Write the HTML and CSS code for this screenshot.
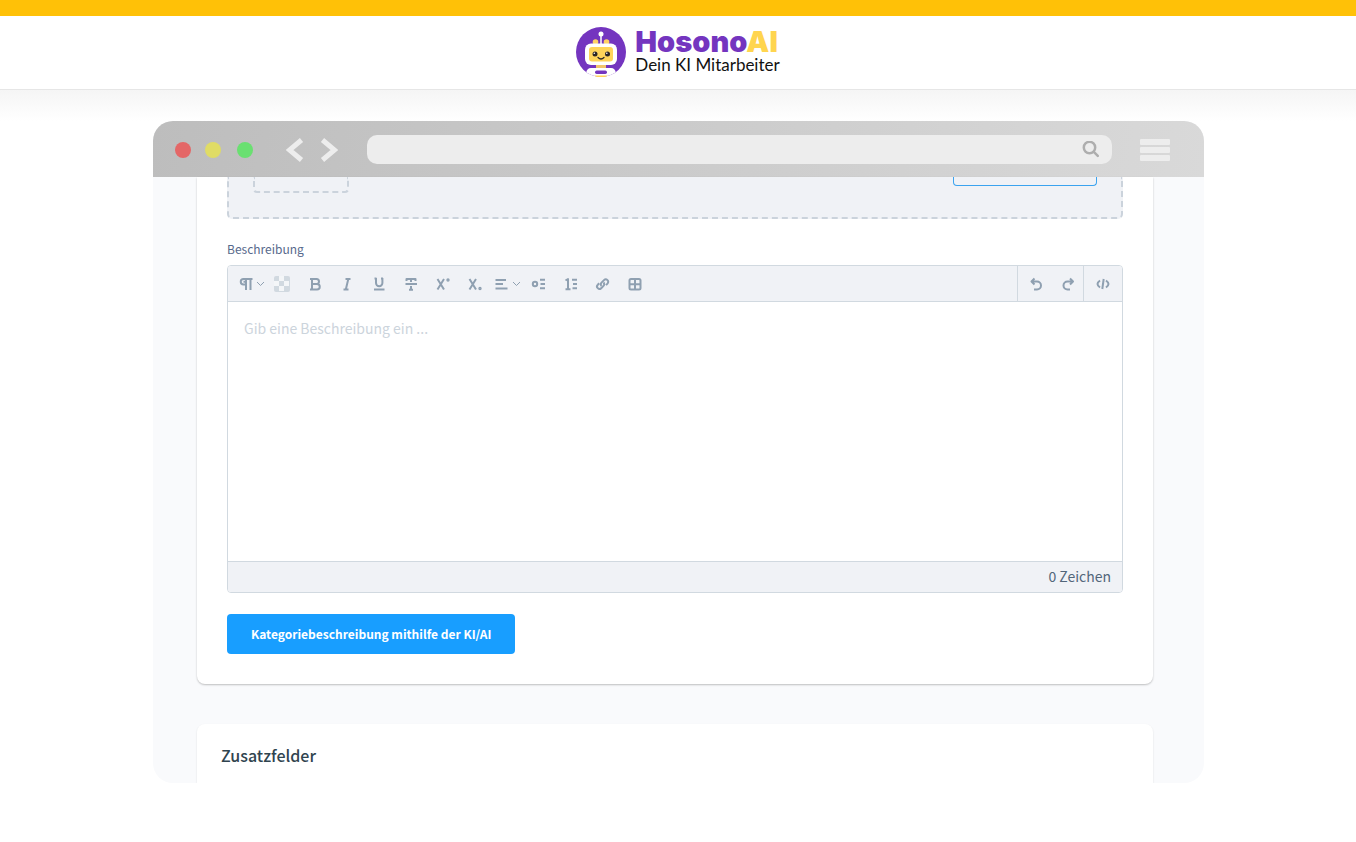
FILE: index.html
```html
<!DOCTYPE html>
<html lang="de">
<head>
<meta charset="utf-8">
<meta name="viewport" content="width=device-width, initial-scale=1">
<title>HosonoAI – Dein KI Mitarbeiter</title>
<link rel="stylesheet" href="styles.css">
</head>
<body>
<div class="topbar"></div>
<header class="header">
  <a class="brand" href="#">
    <svg class="brand-logo" viewBox="0 0 50 50" aria-hidden="true">
      <defs><clipPath id="disc"><circle cx="25" cy="25" r="25"/></clipPath></defs>
      <circle cx="25" cy="25" r="25" fill="#7435bf"/>
      <g clip-path="url(#disc)">
        <path d="M0 50V46L10 46Q11 41 15 41H35Q39 41 40 46H50V50Z" fill="#fff"/>
        <path d="M20 37h10v4h-10z" fill="#f1c46c"/>
      </g>
      <path d="M25 8v9" stroke="#fff" stroke-width="1.5"/>
      <circle cx="25" cy="7" r="2.5" fill="#fff"/>
      <circle cx="19.500" cy="15" r="2.8" fill="#ffd166"/>
      <circle cx="30.500" cy="15" r="2.8" fill="#ffd166"/>
      <rect x="9" y="16.500" width="32" height="21.500" rx="6" fill="#fff"/>
      <rect x="13" y="20" width="24" height="14.500" rx="3" fill="#ffd45a"/>
      <circle cx="19" cy="27" r="2.500" fill="#2b2525"/>
      <circle cx="31.500" cy="27" r="2.500" fill="#2b2525"/>
      <circle cx="18.300" cy="26.200" r=".8" fill="#fff"/>
      <circle cx="30.800" cy="26.200" r=".8" fill="#fff"/>
      <path d="M22 30.500q3 3 6 0" fill="none" stroke="#2b2525" stroke-width="1.200" stroke-linecap="round"/>
      <rect x="19" y="43.500" width="12" height="3.500" rx="1.700" fill="#7435bf"/>
      <path d="M18 48.500h14l-3 1.500h-8z" fill="#ffd45a"/>
    </svg>
    <span class="brand-text">
      <span class="brand-name">Hosono<span class="brand-ai">AI</span></span>
      <span class="brand-claim">Dein KI Mitarbeiter</span>
    </span>
  </a>
</header>

<main class="stage">
  <section class="browser">
    <div class="chrome">
      <span class="dot dot-red"></span>
      <span class="dot dot-yellow"></span>
      <span class="dot dot-green"></span>
      <button class="nav nav-back" type="button" aria-label="Zurück"><svg width="18" height="24" viewBox="0 0 18 24"><path d="M15.500 2 3.500 12l12 10"/></svg></button>
      <button class="nav nav-next" type="button" aria-label="Vor"><svg width="18" height="24" viewBox="0 0 18 24"><path d="M2.500 2l12 10-12 10"/></svg></button>
      <label class="address">
        <input class="address-input" type="text" aria-label="Adresse">
        <svg width="18" height="18" viewBox="0 0 18 18" aria-hidden="true"><circle cx="7.500" cy="6.500" r="5.700"/><path d="M11.800 10.800l4 4"/></svg>
      </label>
      <button class="menu" type="button" aria-label="Menü"><span></span><span></span><span></span></button>
    </div>

    <div class="page">
      <div class="card card-main">
        <div class="upload">
          <div class="upload-preview"></div>
          <button class="upload-button" type="button" aria-label="Hochladen"></button>
        </div>
        <label class="label" for="description">Beschreibung</label>
        <div class="editor">
          <div class="toolbar">
            <button class="tool tool-format" type="button" aria-label="Absatz">
              <svg class="icon" viewBox="0 0 16 16"><path d="M14.500 3H5.500a2.700 2.700 0 0 0 0 5.500H8M8 3v11M12.500 3v11M5.500 5.800H8"/></svg>
              <svg class="caret" viewBox="0 0 9 6"><path d="M1 1l3.500 3.500L8 1"/></svg>
            </button>
            <button class="tool tool-color" type="button" aria-label="Textfarbe">
              <svg class="swatch" viewBox="0 0 16 16"><rect width="16" height="16" rx="2" fill="#d1d9e0"/><path d="M5 0h5v5H5zM0 5h5v5H0zM10 5h5v5h-5zM5 10h5v5H5z" fill="#f4f6f8"/></svg>
            </button>
            <button class="tool" type="button" aria-label="Fett"><svg class="icon" viewBox="0 0 16 16"><path d="M3 3h6.500a2.400 2.400 0 0 1 0 5H5M5 8h5a2.700 2.700 0 0 1 0 5.500H3M5 3v10.500"/></svg></button>
            <button class="tool" type="button" aria-label="Kursiv"><svg class="icon" viewBox="0 0 16 16"><path d="M6.500 3h5M4.500 13.500h5M9.300 3l-2.500 10.500"/></svg></button>
            <button class="tool" type="button" aria-label="Unterstrichen"><svg class="icon" viewBox="0 0 16 16"><path d="M5 2v5a3.200 3.200 0 0 0 6.400 0V2M3.500 2.500h2M10 2.500h2M3 13.500h10.500"/></svg></button>
            <button class="tool" type="button" aria-label="Durchgestrichen"><svg class="icon" viewBox="0 0 16 16"><path d="M3.500 5V3h9v2M2.500 8h11.500M8 3v3M8 10v4M6 13.700h4"/></svg></button>
            <button class="tool" type="button" aria-label="Hochgestellt"><svg class="icon" viewBox="0 0 16 16"><path d="M2.500 3l6.500 10.500M9 3L2.500 13.500"/><circle cx="13" cy="4" r=".7"/></svg></button>
            <button class="tool" type="button" aria-label="Tiefgestellt"><svg class="icon" viewBox="0 0 16 16"><path d="M2.500 3l6.500 10.500M9 3L2.500 13.500"/><circle cx="13" cy="12.500" r=".7"/></svg></button>
            <button class="tool tool-align" type="button" aria-label="Ausrichtung">
              <svg class="icon" viewBox="0 0 16 16"><path d="M2.500 4h10.500M2.500 8h7.500M2.500 12.500h12"/></svg>
              <svg class="caret" viewBox="0 0 9 6"><path d="M1 1l3.500 3.500L8 1"/></svg>
            </button>
            <button class="tool" type="button" aria-label="Aufzählung"><svg class="icon" viewBox="0 0 16 16"><circle cx="4" cy="8" r="2.200"/><path d="M9 3.800h5M9.500 8h4.500M9 12.300h5"/></svg></button>
            <button class="tool" type="button" aria-label="Nummerierung"><svg class="icon" viewBox="0 0 16 16"><path d="M2.500 4.500L5 3v10.500M2.500 13.300h5M9 3.800h5M10 8h4M9.500 12.300h4.500"/></svg></button>
            <button class="tool" type="button" aria-label="Link"><svg class="icon" viewBox="0 0 16 16"><path d="M6.500 10a2.400 2.400 0 0 1 0-3.400l2.500-2.500a2.400 2.400 0 0 1 3.500 3.500l-1.500 1.500M8.500 6.500a2.400 2.400 0 0 1 0 3.400l-2.300 2.300a2.400 2.400 0 0 1-3.400-3.500L4.200 7.200"/></svg></button>
            <button class="tool" type="button" aria-label="Tabelle"><svg class="icon" viewBox="0 0 16 16"><rect x="2.500" y="3" width="11" height="10.500" rx="1.500"/><path d="M8 3v10.500M2.500 8.200h11"/></svg></button>
            <div class="tool-group tool-history">
              <button class="tool" type="button" aria-label="Rückgängig"><svg class="icon" viewBox="0 0 16 16"><path d="M6.500 2.500L3.500 5.500l3 3M3.500 5.500h5.500a4 4 0 0 1 0 8H6"/></svg></button>
              <button class="tool" type="button" aria-label="Wiederholen"><svg class="icon" viewBox="0 0 16 16"><path d="M10 2.500l3 3-3 3M13 5.500H7.500a4 4 0 0 0 0 8h2.500"/></svg></button>
            </div>
            <div class="tool-group">
              <button class="tool tool-code" type="button" aria-label="Quelltext"><svg class="icon" viewBox="0 0 16 16"><path d="M5 4.500C3 6 2.500 7 2.500 8S3 10 5 11.500M11 4.500c2 1.500 2.500 2.500 2.500 3.500s-.5 2-2.500 3.500M8.700 3L7.300 13"/></svg></button>
            </div>
          </div>
          <textarea class="editor-text" id="description" placeholder="Gib eine Beschreibung ein ..."></textarea>
          <div class="editor-footer">0 Zeichen</div>
        </div>
        <button class="primary" type="button">Kategoriebeschreibung mithilfe der KI/AI</button>
      </div>
      <div class="card card-fields">
        <h2 class="card-title">Zusatzfelder</h2>
      </div>
    </div>
  </section>
</main>
</body>
</html>
```
FILE: styles.css
```css
* { box-sizing: border-box; }
body { margin: 0; background: #fff; color: #52667a; font-family: "Noto Sans CJK SC", "Noto Sans", sans-serif; }
button { border: 0; padding: 0; background: none; font: inherit; color: inherit; }

.topbar { height: 16px; background: #ffc107; }
.header { display: flex; justify-content: center; height: 74px; padding-top: 11px; background: #fff; border-bottom: 1px solid #e6e6e6; }
.brand { display: flex; gap: 9px; height: 50px; color: #111; text-decoration: none; }
.brand-logo { width: 50px; height: 50px; }
.brand-text { display: flex; flex-direction: column; white-space: nowrap; }
.brand-name { height: 28px; font: 900 29px/30px Inter, sans-serif; color: #7435bf; }
.brand-ai { color: #ffd54f; }
.brand-claim { font: 400 17px/20px Lato, sans-serif; }

.stage { padding: 31px 152px 59px 153px; background: linear-gradient(#f5f5f5, #fff 31px); }
.browser { border-radius: 20px; overflow: hidden; background: #f9fafc; }
.chrome { display: flex; align-items: center; height: 56px; padding: 1px 34px 0 22px; background: linear-gradient(100deg, #bdbdbd, #d9d9d9); }
.dot { width: 16px; height: 16px; border-radius: 50%; margin-right: 14px; }
.dot-red { background: #e46767; }
.dot-yellow { background: #e0dc65; }
.dot-green { background: #6ae071; margin: 0 33px 0 2px; }
.nav { height: 24px; width: 18px; }
.nav svg { display: block; fill: none; stroke: #ededed; stroke-width: 5; }
.nav-next { margin: 0 29px 0 16px; }
.address { display: flex; align-items: center; flex: 1; height: 29px; padding: 0 12px; border-radius: 10px; background: #ededed; }
.address-input { flex: 1; min-width: 0; border: 0; outline: 0; background: transparent; }
.address svg { fill: none; stroke: #aeaeae; stroke-width: 2.500; stroke-linecap: round; }
.menu { display: flex; flex-direction: column; gap: 2px; width: 30px; margin-left: 28px; }
.menu span { height: 6px; border-radius: 1px; background: #ededed; }

.page { padding: 0 51px 0 44px; }
.card { background: #fff; box-shadow: 0 1px 2px rgba(0, 0, 0, .24); }
.card-main { padding: 0 30px 30px; border-radius: 0 0 8px 8px; }
.upload { display: flex; justify-content: space-between; align-items: flex-start; height: 42px; padding: 0 24px; border: 2px dashed #cbd3dc; border-top: 0; border-radius: 0 0 5px 5px; background: #f0f2f6; }
.upload-preview { width: 96px; height: 16px; border: 2px dashed #cbd3dc; border-top: 0; border-radius: 0 0 4px 4px; }
.upload-button { width: 144px; height: 9px; border: 1px solid #3ba3ef; border-top: 0; border-radius: 0 0 4px 4px; }
.label { display: block; margin: 19px 0 6px; font-size: 12px; line-height: 21px; color: #57698c; }
.editor { border: 1px solid #d1d9e0; border-radius: 4px; overflow: hidden; }
.toolbar { display: flex; height: 36px; background: #f0f2f6; border-bottom: 1px solid #d1d9e0; color: #8fa0b1; }
.tool { display: flex; align-items: center; justify-content: center; width: 32px; height: 35px; }
.icon { flex: none; width: 16px; height: 16px; fill: none; stroke: currentColor; stroke-width: 2; stroke-linejoin: round; }
.caret { flex: none; width: 9px; height: 6px; fill: none; stroke: currentColor; stroke-width: 1; }
.swatch { width: 16px; height: 16px; }
.tool-format { width: 37px; padding-left: 10px; gap: 2px; }
.tool-color { width: 34px; }
.tool-align { gap: 3px; }
.tool-group { display: flex; border-left: 1px solid #d1d9e0; }
.tool-history { margin-left: auto; padding-left: 2px; }
.tool-history + .tool-group { margin-left: -1px; }
.tool-code { width: 38px; }
.editor-text { display: block; width: 100%; height: 259px; padding: 14px 16px; border: 0; outline: 0; resize: none; font: 400 14px/24px "Noto Sans CJK SC", sans-serif; color: #52667a; }
.editor-text::placeholder { color: #ccd4dc; opacity: 1; }
.editor-footer { height: 31px; padding-right: 11px; border-top: 1px solid #d1d9e0; background: #f0f2f6; font-size: 14px; line-height: 28px; text-align: right; }
.primary { display: block; height: 40px; margin-top: 21px; padding: 0 24px 2px; border-radius: 4px; background: #189eff; color: #fff; font-size: 12px; font-weight: 700; }
.card-fields { margin-top: 40px; height: 59px; padding: 19px 24px; border-radius: 8px 8px 0 0; box-shadow: 0 1px 2px rgba(0, 0, 0, .12); }
.card-title { margin: 0; font-size: 16px; line-height: 24px; font-weight: 500; color: #30444f; }
```
